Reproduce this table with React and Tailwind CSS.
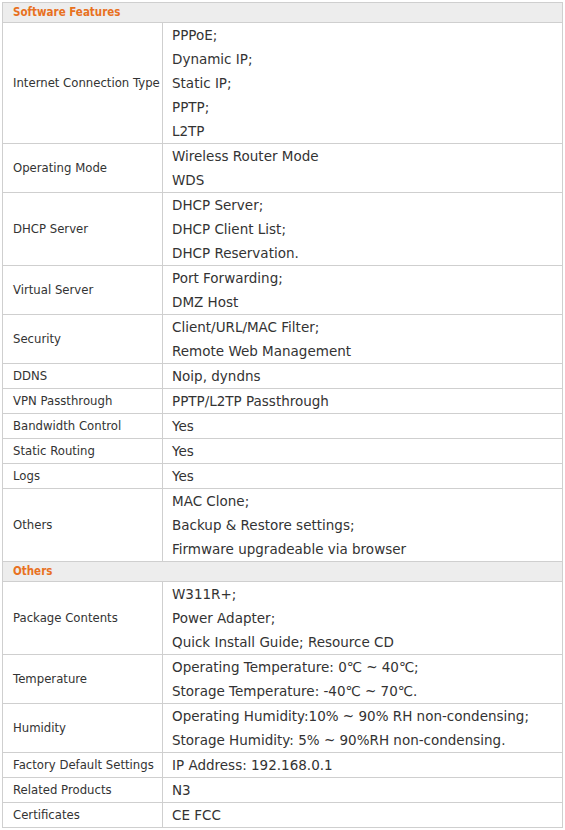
import React from "react";

const sections = [
  {
    title: "Software Features",
    rows: [
      ["Internet Connection Type", ["PPPoE;", "Dynamic IP;", "Static IP;", "PPTP;", "L2TP"]],
      ["Operating Mode", ["Wireless Router Mode", "WDS"]],
      ["DHCP Server", ["DHCP Server;", "DHCP Client List;", "DHCP Reservation."]],
      ["Virtual Server", ["Port Forwarding;", "DMZ Host"]],
      ["Security", ["Client/URL/MAC Filter;", "Remote Web Management"]],
      ["DDNS", ["Noip, dyndns"]],
      ["VPN Passthrough", ["PPTP/L2TP Passthrough"]],
      ["Bandwidth Control", ["Yes"]],
      ["Static Routing", ["Yes"]],
      ["Logs", ["Yes"]],
      ["Others", ["MAC Clone;", "Backup & Restore settings;", "Firmware upgradeable via browser"]],
    ],
  },
  {
    title: "Others",
    rows: [
      ["Package Contents", ["W311R+;", "Power Adapter;", "Quick Install Guide; Resource CD"]],
      ["Temperature", ["Operating Temperature: 0℃ ~ 40℃;", "Storage Temperature: -40℃ ~ 70℃."]],
      ["Humidity", ["Operating Humidity:10% ~ 90% RH non-condensing;", "Storage Humidity: 5% ~ 90%RH non-condensing."]],
      ["Factory Default Settings", ["IP Address: 192.168.0.1"]],
      ["Related Products", ["N3"]],
      ["Certificates", ["CE FCC"]],
    ],
  },
];

export default function App() {
  return (
    <div className="bg-white w-[565px] h-[830px] pt-[2px] pl-[2px]" style={{ fontFamily: '"DejaVu Sans", sans-serif' }}>
      <table className="w-[561px] border-collapse border border-[#cfcfcf] text-[#333]">
        <tbody>
          {sections.map((s) => (
            <React.Fragment key={s.title}>
              <tr className="bg-[#ededed]">
                <td
                  colSpan={2}
                  className="h-[20px] border border-[#cfcfcf] p-0 pl-[10px] text-[11.5px] leading-[19px] font-bold text-[#e8711f]"
                  style={{ fontFamily: '"DejaVu Sans Condensed", "DejaVu Sans", sans-serif' }}
                >
                  {s.title}
                </td>
              </tr>
              {s.rows.map(([label, vals]) => (
                <tr key={label}>
                  <td className="w-[160px] border border-[#cfcfcf] p-0 pl-[10px] pt-[2px] text-[11.7px] align-middle whitespace-nowrap">
                    {label}
                  </td>
                  <td className="border border-[#cfcfcf] p-0 pl-[9px] text-[13.5px] leading-[24px]">
                    {vals.map((v) => (
                      <div key={v} className="h-[24px] whitespace-nowrap">{v}</div>
                    ))}
                  </td>
                </tr>
              ))}
            </React.Fragment>
          ))}
        </tbody>
      </table>
    </div>
  );
}
